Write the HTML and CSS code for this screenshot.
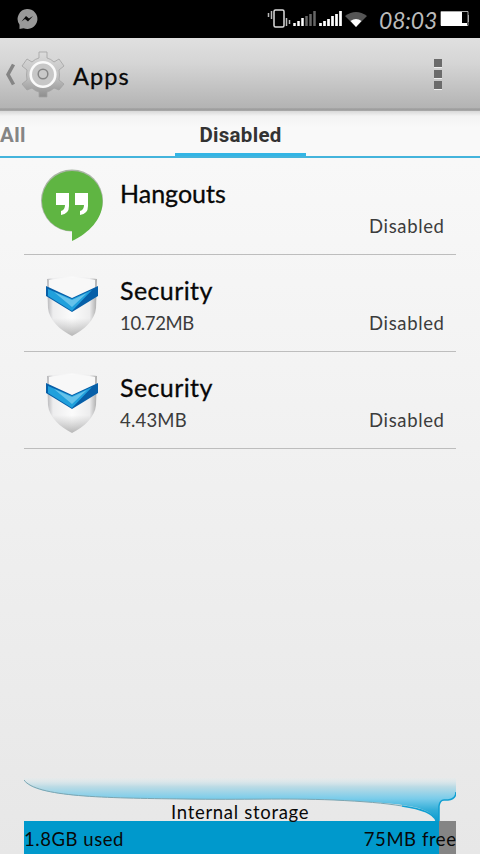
FILE: index.html
```html
<!DOCTYPE html>
<html lang="en">
<head>
<meta charset="utf-8">
<title>Apps</title>
<link rel="stylesheet" href="styles.css">
</head>
<body>
<header class="status">
  <svg class="messenger" width="22" height="22" viewBox="0 0 22 22"><path fill="#999" d="M11 1a10 10 0 1 1-3.500 19.200L3.500 21v-4.200A10 10 0 0 1 11 1z"/><path fill="#0b0b0b" d="M5.500 13.500 10 8l3 2.500 4-2.500-5 5.500-3-2.500z"/></svg>
  <svg class="signals" width="104" height="22" viewBox="0 0 104 22">
    <rect x="9" y="2" width="10" height="17" rx="1.500" fill="none" stroke="#ddd" stroke-width="1.500"/>
    <path d="M3.500 5v4M6.500 3v8M21.500 10v8M24.500 12v4" stroke="#bbb" stroke-width="1.500"/>
    <path d="M29.500 18v-3M33.500 18v-5M37.500 18v-8" stroke="#fff" stroke-width="2.500"/>
    <path d="M41.500 18V8M45.500 18V6M49.500 18V3" stroke="#666" stroke-width="2.500"/>
    <path d="M55.500 18v-3M59.500 18v-5M63.500 18v-7M67.500 18V8M71.500 18V6M75.500 18V3" stroke="#fff" stroke-width="2.700"/>
    <path d="M80 8Q91 0 102 8L91 19z" fill="#555"/><path d="M85.500 13Q91 9 96.500 13L91 19z" fill="#fff"/>
  </svg>
  <span class="clock">08:03</span>
  <svg class="battery" width="30" height="18" viewBox="0 0 30 18"><path d="M1 1.500h27v14H1z" fill="none" stroke="#aaa"/><path d="M1 2h21v11h5v3H1z" fill="#fff"/><path d="M28.500 5v7" stroke="#aaa"/></svg>
</header>
<div class="actionbar">
  <svg class="back" width="14" height="24" viewBox="0 0 14 24"><path d="M10.500 1.500 5 11.500l5.500 10" fill="none" stroke="#858585" stroke-width="3.500"/></svg>
  <svg class="gear" width="46" height="50" viewBox="-23 -25 46 50">
    <defs><linearGradient id="metal" x1="0" y1="0" x2="0" y2="1"><stop stop-color="#dcdcdc"/><stop offset=".6" stop-color="#bdbdbd"/><stop offset="1" stop-color="#8e8e8e"/></linearGradient></defs>
    <path fill="url(#metal)" stroke="#a2a2a2" stroke-width=".8" d="M-4-23H4V-17Q8-16 11-13L16-16 21-9 16-5Q17 0 16 5L21 9 16 15 11 13Q8 16 4 17V22H-4V17Q-8 16-11 13L-16 15-21 9-16 5Q-17 0-16-5L-21-9-16-16-11-13Q-8-16-4-17Z"/>
    <circle r="12.300" cy="-.5" fill="#c7c7c7" stroke="#fafafa" stroke-width="2.600"/><circle r="4.800" cy="-1" fill="#c9c9c9" stroke="#858585" stroke-width="1.500"/>
  </svg>
  <h1>Apps</h1>
  <div class="overflow"><i></i><i></i><i></i></div>
</div>
<nav class="tabs"><span class="all">All</span><span class="current">Disabled</span></nav>
<svg class="defs" width="0" height="0"><defs>
  <linearGradient id="shade"><stop stop-color="#b5b5b8"/><stop offset=".12" stop-color="#ededee"/><stop offset=".5" stop-color="#fbfbfb"/><stop offset=".85" stop-color="#ededee"/><stop offset="1" stop-color="#aaa"/></linearGradient>
  <linearGradient id="fade" x1="0" y1="0" x2="0" y2="1"><stop offset=".7" stop-color="#999" stop-opacity="0"/><stop offset="1" stop-color="#888" stop-opacity=".6"/></linearGradient>
  <symbol id="shield" viewBox="0 0 54 62"><path d="M2 4Q27-1 52 4L51 33C50 45 39 55 27 61 15 55 4 45 3 33Z" fill="url(#shade)"/><path d="M2 4Q27-1 52 4L51 33C50 45 39 55 27 61 15 55 4 45 3 33Z" fill="url(#fade)"/><path d="M4 5Q27 0 50 5V13L27 23 4 13Z" fill="#f8f8f8"/><path d="M1 11 27 23 53 11V21L27 37 1 21Z" fill="#075fa8"/><path d="M3 14 27 24 47 15 27 36 3 21Z" fill="#20a0dc"/><path d="M9 17 27 25 42 18 27 32Z" fill="#65c2ea"/></symbol>
</defs></svg>
<main>
  <article class="app"><svg class="hangouts" width="64" height="74" viewBox="0 0 64 74"><circle cx="32" cy="31.500" r="31" fill="#a9b5a4"/><path fill="#5fb542" d="M32 2a30.500 30.500 0 0 1 30.500 31C62.500 50 49 64 32 72V62A30 30 0 0 1 32 2z"/><path fill="#fff" d="M16 24h13v13q0 8-8 9v-4q4-1 4-6h-9zM35 24h13v13q0 8-8 9v-4q4-1 4-6h-9z"/></svg>
    <div class="info"><h2 class="hang">Hangouts</h2><p><span></span><span class="state">Disabled</span></p></div></article>
  <article class="app"><svg class="shield" width="54" height="62"><use href="#shield"/></svg>
    <div class="info"><h2>Security</h2><p><span class="size long">10.72MB</span><span class="state">Disabled</span></p></div></article>
  <article class="app"><svg class="shield" width="54" height="62"><use href="#shield"/></svg>
    <div class="info"><h2>Security</h2><p><span class="size">4.43MB</span><span class="state">Disabled</span></p></div></article>
</main>
<footer>
  <div class="curve"><svg width="432" height="43" viewBox="0 0 432 43">
    <defs><linearGradient id="water" x1="0" y1="0" x2="0" y2="1"><stop stop-color="#ddebef" stop-opacity=".2"/><stop offset=".2" stop-color="#bcdbe5"/><stop offset=".48" stop-color="#7accea"/><stop offset=".75" stop-color="#30add8"/><stop offset="1" stop-color="#0b9bcf"/></linearGradient></defs>
    <path fill="url(#water)" d="M0 0H432V14Q432 21 424 22H420Q416 22 415 28V43H412C409 27 370 25 310 22 260 20 220 22 160 21 80 20 12 19 0 3Z"/>
    <path fill="none" stroke="#7ba5b1" d="M0 2C12 19 80 20 160 21 220 22 260 20 310 22 340 23.500 360 25 378 28"/><path fill="none" stroke="#119fd1" stroke-width="1.500" d="M378 28C398 31 410 35 412 43M415 43V28Q416 22 420 22H424Q432 21 432 14"/>
  </svg><span class="label">Internal storage</span></div>
  <div class="bar"><span class="used">1.8GB used</span><span class="free">75MB free</span></div>
</footer>
</body>
</html>
```
FILE: styles.css
```css
* { box-sizing: border-box; }
body { margin: 0; width: 480px; height: 854px; overflow: hidden; display: flex; flex-direction: column; font-family: Lato, sans-serif; color: #080808; background: linear-gradient(#f8f8f8 160px, #e7e7e7); }
h1, h2, p { margin: 0; font-weight: 400; white-space: nowrap; }
svg { flex: none; display: block; }
.defs { position: absolute; }
.status { height: 38px; flex: none; background: #000; display: flex; align-items: flex-start; }
.messenger { margin: 8px 0 0 16px; }
.signals { margin: 8px 0 0 227px; }
.clock { color: #bbb; font-size: 23px; line-height: 24px; margin: 8px 0 0 10px; width: 61px; font-style: italic; letter-spacing: -.2px; }
.battery { margin-top: 10px; }
.actionbar { height: 73px; flex: none; display: flex; align-items: center; background: linear-gradient(#e0e0e0, #d5d5d5 35%, #b3b3b3 96%, #999 97%, #aaa); }
.back { margin-left: 3px; }
.gear { margin-left: 3px; }
h1 { margin: 2px 0 0 7px; font-size: 23.5px; line-height: 30px; -webkit-text-stroke: .3px #080808; letter-spacing: 1.1px; }
.overflow { margin: -1px 38px 0 auto; display: flex; flex-direction: column; gap: 3px; }
.overflow i { width: 8px; height: 8px; background: #6b6b6b; box-shadow: 0 1px #eee; }
.tabs { height: 47px; flex: none; display: flex; font: 700 20.5px/49px Roboto, sans-serif; color: #333; border-bottom: 2px solid #44b4dc; background: linear-gradient(#d8d8d8, #f3f3f3 5px, #f9f9f9 16px); }
.all { width: 175px; color: #858585; letter-spacing: .4px; }
.current { width: 131px; height: 45px; text-align: center; border-bottom: 3px solid #33b5e5; letter-spacing: .3px; }
main { padding: 0 24px; }
.app { height: 97px; border-bottom: 1px solid #bdbdbd; display: flex; align-items: flex-start; }
.hangouts { margin: 11px 16px 0 16px; }
.shield { margin: 20px 21px 0 21px; }
.info { flex: 1; padding: 19px 12px 0 0; }
h2 { font-size: 25px; line-height: 32px; -webkit-text-stroke: .3px #080808; letter-spacing: .4px; }
.hang { letter-spacing: 0; }
.info p { display: flex; justify-content: space-between; font-size: 18.5px; line-height: 24px; color: #3c3c3c; margin-top: 5px; }
.state { letter-spacing: .65px; margin-right: -.65px; }
.size { letter-spacing: .2px; }
.long { letter-spacing: -.35px; }
footer { margin: auto 24px 0; flex: none; }
.curve { height: 43px; position: relative; }
.label { position: absolute; left: 147px; top: 22px; font-size: 18.5px; line-height: 24px; white-space: nowrap; letter-spacing: .7px; }
.bar { height: 33px; display: flex; justify-content: space-between; font-size: 18.5px; line-height: 37px; letter-spacing: .55px; background: linear-gradient(90deg, #0099cc 415px, #858585 415px); }
.free { margin-right: -.5px; }
```
